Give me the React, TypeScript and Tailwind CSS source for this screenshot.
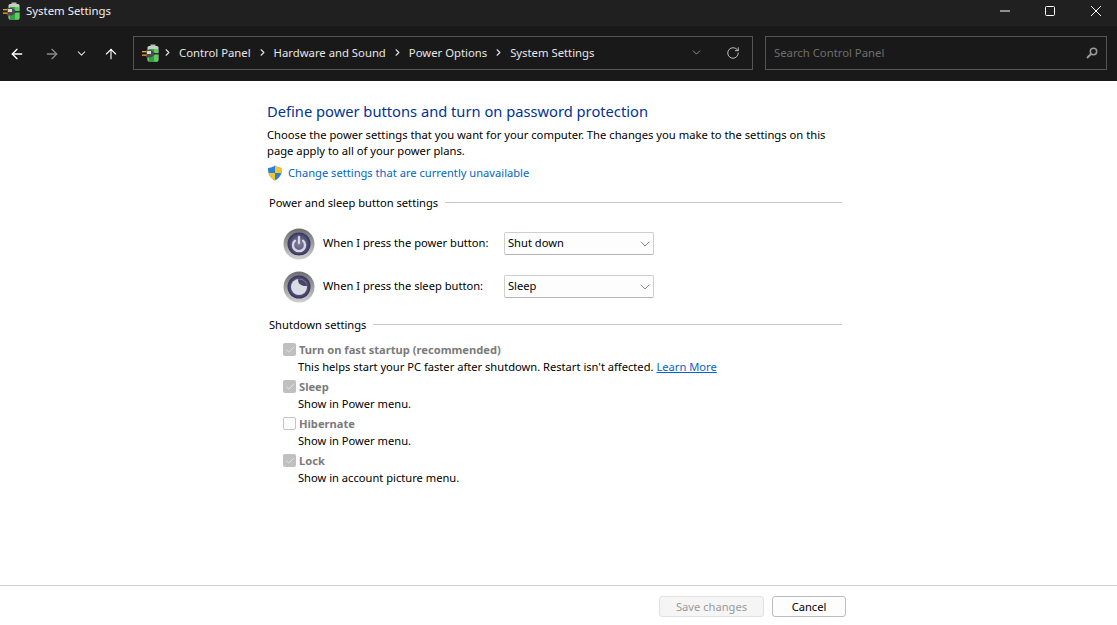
import { ArrowLeft, ArrowRight, ArrowUp, ChevronDown, ChevronRight, RotateCw, Check } from "lucide-react";

function BatteryIcon() {
  return (
    <svg width="18" height="18" viewBox="0 0 18 18" className="shrink-0">
      <rect x="8.5" y="0.5" width="5" height="2" fill="#b9bdb9" />
      <rect x="5.5" y="2" width="11" height="15.5" rx="1.5" fill="#c7cdc7" />
      <rect x="6.5" y="5" width="9" height="12.5" rx="1" fill="#2aa63a" />
      <rect x="12" y="5" width="3.5" height="12.5" fill="#58d05c" />
      <path d="M4 6 L9 6 L12.5 8.5 L12.5 11 L9 13.5 L4 13.5 Z" fill="#4a4a4a" />
      <path d="M12 9 L17 9 L17 10.5 L12 10.5 Z" fill="#303030" />
      <rect x="5" y="7" width="4" height="3" fill="#d8d8d8" />
      <rect x="0" y="7" width="4.5" height="1.3" fill="#f2a81d" />
      <rect x="0" y="10.5" width="4.5" height="1.3" fill="#f2a81d" />
    </svg>
  );
}

function ShieldIcon() {
  return (
    <svg width="16" height="16" viewBox="0 0 16 16" className="shrink-0">
      <path d="M8 0.5 C10 2 12.5 2.8 15 3 C15 9 13 13 8 15.5 C3 13 1 9 1 3 C3.5 2.8 6 2 8 0.5 Z" fill="#2a7fd6" />
      <path d="M8 0.5 C10 2 12.5 2.8 15 3 C15 5 14.8 6.5 14.4 8 L8 8 Z" fill="#f7c325" />
      <path d="M8 8 L1.6 8 C2.5 11.2 4.5 13.8 8 15.5 Z" fill="#f7c325" />
    </svg>
  );
}

function RoundButton({ kind }: { kind: "power" | "sleep" }) {
  return (
    <svg width="32" height="32" viewBox="0 0 32 32" className="shrink-0">
      <defs>
        <linearGradient id={kind + "ring"} x1="0" y1="0" x2="0" y2="1">
          <stop offset="0" stopColor="#6c6c6f" />
          <stop offset="1" stopColor="#d0d0d2" />
        </linearGradient>
        <radialGradient id={kind + "face"}>
          <stop offset="0" stopColor="#80809c" />
          <stop offset="0.7" stopColor="#55557a" />
          <stop offset="1" stopColor="#33335a" />
        </radialGradient>
      </defs>
      <circle cx="16" cy="16" r="15.5" fill={`url(#${kind}ring)`} />
      <circle cx="16" cy="16" r="11.5" fill={`url(#${kind}face)`} />
      {kind === "power" ? (
        <g fill="none" stroke="#d6d6e2" strokeWidth="2.4" strokeLinecap="round">
          <path d="M12 12.7 A6 6 0 1 0 20 12.7" />
          <path d="M16 9 L16 15" />
        </g>
      ) : (
        <>
          <circle cx="16" cy="16" r="8" fill="#dcdce6" />
          <path d="M15.2 8 C14.4 12 17.6 15.4 24 15 C23.5 11 20 8 15.2 8 Z" fill="#45456a" />
        </>
      )}
    </svg>
  );
}

function Crumb({ label }: { label: string }) {
  return (
    <>
      <ChevronRight size={11} strokeWidth={2.5} className="text-[#e0e0e0] shrink-0" />
      <span className="mx-[6px] pt-[2px] whitespace-nowrap">{label}</span>
    </>
  );
}

function Dropdown({ value }: { value: string }) {
  return (
    <div className="w-[150px] h-[23px] flex items-center justify-between pl-[3px] bg-[#fdfdfd] border border-[#cfcfcf] border-b-[#b4b4b4] rounded-[2px] text-black">
      <span>{value}</span>
      <ChevronDown size={16} strokeWidth={1} className="text-[#555]" />
    </div>
  );
}

function Option({ title, desc, checked, link }: { title: string; desc: string; checked: boolean; link?: string }) {
  return (
    <div className="flex flex-col h-[37px]">
      <div className="flex items-center h-[19px]">
        <div className={`w-[13px] h-[13px] rounded-[2px] flex items-center justify-center mr-[3px] ml-[1px] ${checked ? "bg-[#c0c0c0]" : "bg-[#fbfbfb] border border-[#c4c4c4]"}`}>
          {checked && <Check size={10} strokeWidth={2} className="text-[#ececec]" />}
        </div>
        <span className="font-bold text-[#7b7b7b]">{title}</span>
      </div>
      <div className="h-[18px] leading-[16px] text-black pl-[16px]">
        {desc}
        {link && <span className="text-[#0066cc] underline ml-[3px]">{link}</span>}
      </div>
    </div>
  );
}

function Section({ title }: { title: string }) {
  return (
    <div className="flex items-center gap-[7px] text-black">
      <span className="whitespace-nowrap">{title}</span>
      <div className="h-px flex-1 bg-[#c8c8c8] mb-[2px]" />
    </div>
  );
}

export default function App() {
  return (
    <div className="w-[1117px] h-[625px] flex flex-col overflow-hidden bg-white text-[11.15px] [font-family:'Noto_Sans',sans-serif]">
      {/* title bar */}
      <div className="h-[26px] bg-[#202020] flex items-center pl-[3px] pb-[4px] text-white shrink-0">
        <BatteryIcon />
        <span className="ml-[5px] text-[11.4px] text-[#f0f0f0]">System Settings</span>
        <div className="ml-auto flex items-center mr-[16px] gap-[35px]">
          <svg width="10" height="10" viewBox="0 0 10 10"><path d="M0 5 H10" stroke="#fff" strokeWidth="1" /></svg>
          <svg width="10" height="10" viewBox="0 0 10 10"><rect x="0.5" y="0.5" width="9" height="9" rx="1" fill="none" stroke="#fff" strokeWidth="1" /></svg>
          <svg width="10" height="10" viewBox="0 0 10 10" className="ml-[1px]"><path d="M0 0 L10 10 M10 0 L0 10" stroke="#fff" strokeWidth="1" /></svg>
        </div>
      </div>

      {/* address bar */}
      <div className="h-[55px] bg-[#191919] flex items-center shrink-0 text-[11.3px]">
        <div className="w-[133px] flex items-center text-white">
          <ArrowLeft size={16} strokeWidth={2} className="ml-[9px]" />
          <ArrowRight size={16} strokeWidth={2} className="ml-[19px] text-[#8a8a8a]" />
          <ChevronDown size={13} strokeWidth={2} className="ml-[15px] text-[#d8d8d8]" />
          <ArrowUp size={16} strokeWidth={1.7} className="ml-[15px]" />
        </div>
        <div className="w-[620px] h-[34px] border border-[#555] flex items-center pl-[8px] text-[#e6e6e6] -mt-[2px]">
          <BatteryIcon />
          <span className="w-[2px]" />
          <Crumb label="Control Panel" />
          <Crumb label="Hardware and Sound" />
          <Crumb label="Power Options" />
          <Crumb label="System Settings" />
          <ChevronDown size={13} strokeWidth={1.2} className="ml-auto mr-[23px] text-[#ccc]" />
          <RotateCw size={14} strokeWidth={1.5} className="mr-[12px] text-[#d0d0d0]" />
        </div>
        <div className="w-[342px] h-[34px] ml-[12px] border border-[#555] flex items-center justify-between pl-[8px] pr-[8px] text-[#6e6e6e] -mt-[2px]">
          <span className="pt-[2px]">Search Control Panel</span>
          <svg width="12" height="12" viewBox="0 0 12 12">
            <circle cx="7.5" cy="4.5" r="3.2" fill="none" stroke="#999" strokeWidth="1.5" />
            <path d="M5.2 6.8 L1 11" stroke="#999" strokeWidth="2" />
          </svg>
        </div>
      </div>

      {/* content */}
      <div className="flex-1 pl-[267px] pt-[20px]">
        <div className="w-[575px]">
          <h1 className="text-[14.7px] leading-[21px] text-[#003399]">Define power buttons and turn on password protection</h1>
          <p className="mt-[5px] leading-[16px] text-black text-[11.22px]">
            Choose the power settings that you want for your computer. The changes you make to the settings on this page apply to all of your power plans.
          </p>
          <div className="flex items-center mt-[5px] h-[18px]">
            <ShieldIcon />
            <span className="ml-[5px] text-[#0066cc]">Change settings that are currently unavailable</span>
          </div>

          <div className="mt-[13px] pl-[2px]">
            <Section title="Power and sleep button settings" />
          </div>

          <div className="mt-[16px] pl-[16px] flex flex-col gap-[11px]">
            <div className="flex items-center h-[32px]">
              <RoundButton kind="power" />
              <span className="w-[181px] ml-[8px] text-black">When I press the power button:</span>
              <Dropdown value="Shut down" />
            </div>
            <div className="flex items-center h-[32px]">
              <RoundButton kind="sleep" />
              <span className="w-[181px] ml-[8px] text-black">When I press the sleep button:</span>
              <Dropdown value="Sleep" />
            </div>
          </div>

          <div className="mt-[14px] pl-[2px]">
            <Section title="Shutdown settings" />
          </div>

          <div className="mt-[7px] pl-[15px]">
            <Option title="Turn on fast startup (recommended)" desc="This helps start your PC faster after shutdown. Restart isn't affected." link="Learn More" checked />
            <Option title="Sleep" desc="Show in Power menu." checked />
            <Option title="Hibernate" desc="Show in Power menu." checked={false} />
            <Option title="Lock" desc="Show in account picture menu." checked />
          </div>
        </div>
      </div>

      {/* footer */}
      <div className="h-[40px] border-t border-[#d0d0d0] bg-white flex items-start justify-end pt-[10px] pr-[271px] gap-[8px] shrink-0">
        <div className="w-[105px] h-[21px] pt-[1px] bg-[#f5f5f5] border border-[#e2e2e2] rounded-[3px] flex items-center justify-center text-[#9a9a9a]">Save changes</div>
        <div className="w-[74px] h-[21px] pt-[1px] bg-[#fdfdfd] border border-[#bdbdbd] rounded-[3px] flex items-center justify-center text-black">Cancel</div>
      </div>
    </div>
  );
}
